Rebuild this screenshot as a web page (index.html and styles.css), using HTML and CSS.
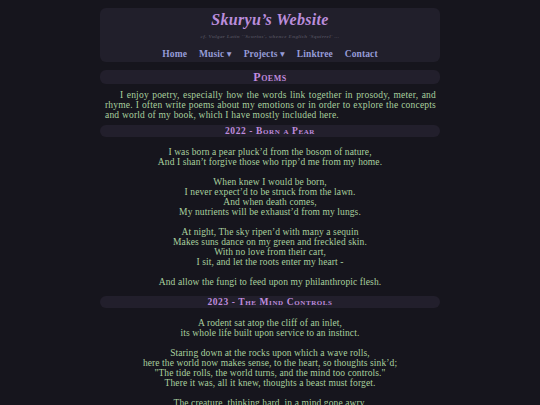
FILE: index.html
```html
<!DOCTYPE html>
<html lang="en">
<head>
<meta charset="utf-8">
<title>Skuryu's Website - Poems</title>
<link rel="stylesheet" href="styles.css">
</head>
<body>
<div class="page">
  <header class="site-header">
    <h1 class="site-title">Skuryu’s Website</h1>
    <p class="tagline">cf. Vulgar Latin ''Scurius', whence English 'Squirrel' ...</p>
    <nav class="nav">
      <a href="#">Home</a>
      <a href="#">Music ▾</a>
      <a href="#">Projects ▾</a>
      <a href="#">Linktree</a>
      <a href="#">Contact</a>
    </nav>
  </header>

  <h2 class="page-title">Poems</h2>
  <p class="intro">I enjoy poetry, especially how the words link together in prosody, meter, and rhyme. I often write poems about my emotions or in order to explore the concepts and world of my book, which I have mostly included here.</p>

  <h3 class="poem-title">2022 - Born a Pear</h3>
  <div class="poem">
    <p>I was born a pear pluck’d from the bosom of nature,<br>And I shan’t forgive those who ripp’d me from my home.</p>
    <p>When knew I would be born,<br>I never expect’d to be struck from the lawn.<br>And when death comes,<br>My nutrients will be exhaust’d from my lungs.</p>
    <p>At night, The sky ripen’d with many a sequin<br>Makes suns dance on my green and freckled skin.<br>With no love from their cart,<br>I sit, and let the roots enter my heart -</p>
    <p>And allow the fungi to feed upon my philanthropic flesh.</p>
  </div>

  <h3 class="poem-title">2023 - The Mind Controls</h3>
  <div class="poem">
    <p>A rodent sat atop the cliff of an inlet,<br>its whole life built upon service to an instinct.</p>
    <p>Staring down at the rocks upon which a wave rolls,<br>here the world now makes sense, to the heart, so thoughts sink’d;<br>"The tide rolls, the world turns, and the mind too controls."<br>There it was, all it knew, thoughts a beast must forget.</p>
    <p>The creature, thinking hard, in a mind gone awry,</p>
  </div>
</div>
</body>
</html>
```
FILE: styles.css
```css
html, body {
  margin: 0;
  padding: 0;
}
body {
  background: #16151d;
  color: #a9d09f;
  font-family: "Liberation Serif", "DejaVu Serif", serif;
  font-size: 9.5px;
  line-height: 10px;
  letter-spacing: 0.1px;
}
.page {
  width: 340px;
  margin: 8px auto 0;
}
.site-header {
  background: #211f2b;
  border-radius: 6px;
  padding: 2px 0 1px;
  text-align: center;
}
.site-title {
  margin: 0;
  font-size: 16px;
  line-height: 20px;
  font-style: italic;
  font-weight: bold;
  letter-spacing: 0.3px;
  color: #bb8ddb;
}
.tagline {
  margin: 0;
  font-size: 5px;
  line-height: 14px;
  font-style: italic;
  font-weight: bold;
  letter-spacing: 0.4px;
  color: #4f4d5a;
}
.nav {
  margin-top: 3px;
  display: flex;
  justify-content: center;
  gap: 12px;
  line-height: 14px;
}
.nav a {
  color: #969cd8;
  text-decoration: none;
  font-size: 9.5px;
  font-weight: bold;
}
.page-title {
  margin: 8px 0 0;
  background: #221f2c;
  border-radius: 6px;
  text-align: center;
  font-size: 12px;
  line-height: 14px;
  font-variant: small-caps;
  font-weight: bold;
  letter-spacing: 0.5px;
  color: #c08bdf;
}
.intro {
  margin: 6px 0 0;
  padding: 0 4px 0 5px;
  text-align: justify;
  text-indent: 15px;
  letter-spacing: 0.2px;
}
.poem-title {
  margin: 5px 0 0;
  background: #221f2c;
  border-radius: 6px;
  text-align: center;
  font-size: 9.5px;
  line-height: 12px;
  font-variant: small-caps;
  font-weight: bold;
  letter-spacing: 0.6px;
  color: #bf8bdc;
}
.poem {
  padding: 10px 0 4px;
  text-align: center;
}
.poem p {
  margin: 0 0 10px;
}
.poem p:last-child {
  margin-bottom: 0;
}
```
